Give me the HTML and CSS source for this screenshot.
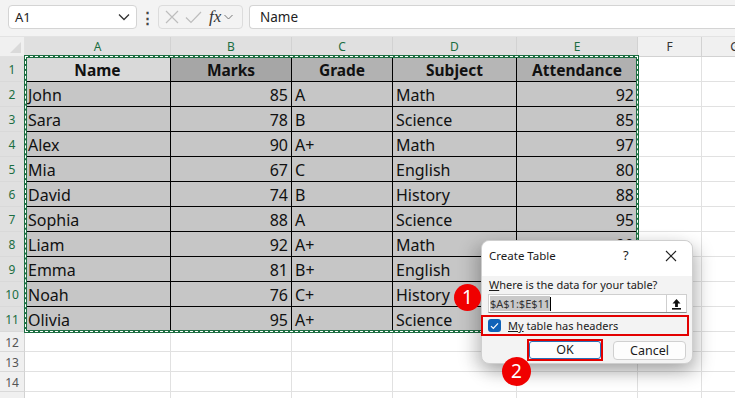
FILE: index.html
```html
<!DOCTYPE html>
<html lang="en">
<head>
	<meta charset="UTF-8">
	<title>Create Table</title>
	<link rel="stylesheet" href="styles.css">
</head>
<body>
	<div class="topbar">
		<div class="namebox">
			<span>A1</span>
			<svg width="12" height="8" viewBox="0 0 12 8"><path d="M1 1.5l5 5 5-5" fill="none" stroke="#333" stroke-width="1.3"/></svg>
		</div>
		<div class="dots">&#8942;</div>
		<div class="fxbox">
			<svg width="16" height="16" viewBox="0 0 16 16"><path d="M2 2l12 12M14 2L2 14" stroke="#bdbdbd" stroke-width="1.2" fill="none"/></svg>
			<svg width="17" height="16" viewBox="0 0 17 16"><path d="M1 8.5l5 5L16 3" stroke="#bdbdbd" stroke-width="1.2" fill="none"/></svg>
			<span class="fx">fx</span>
			<svg width="9" height="6" viewBox="0 0 9 6"><path d="M.5 1l4 4 4-4" fill="none" stroke="#777" stroke-width="1"/></svg>
		</div>
		<div class="formula">Name</div>
	</div>

	<div class="sheet">
		<div class="corner"><span class="tri"></span></div>
		<div class="ch sel">A</div><div class="ch sel">B</div><div class="ch sel">C</div><div class="ch sel">D</div><div class="ch sel">E</div><div class="ch">F</div><div class="ch">G</div>

		<div class="rh sel">1</div>
		<div class="t h h1">Name</div><div class="t h h2">Marks</div><div class="t h h3">Grade</div><div class="t h h4">Subject</div><div class="t h h5">Attendance</div><div class="g"></div><div class="g"></div>

		<div class="rh sel">2</div>
		<div class="t">John</div><div class="t n">85</div><div class="t">A</div><div class="t">Math</div><div class="t n">92</div><div class="g"></div><div class="g"></div>

		<div class="rh sel">3</div>
		<div class="t">Sara</div><div class="t n">78</div><div class="t">B</div><div class="t">Science</div><div class="t n">85</div><div class="g"></div><div class="g"></div>

		<div class="rh sel">4</div>
		<div class="t">Alex</div><div class="t n">90</div><div class="t">A+</div><div class="t">Math</div><div class="t n">97</div><div class="g"></div><div class="g"></div>

		<div class="rh sel">5</div>
		<div class="t">Mia</div><div class="t n">67</div><div class="t">C</div><div class="t">English</div><div class="t n">80</div><div class="g"></div><div class="g"></div>

		<div class="rh sel">6</div>
		<div class="t">David</div><div class="t n">74</div><div class="t">B</div><div class="t">History</div><div class="t n">88</div><div class="g"></div><div class="g"></div>

		<div class="rh sel">7</div>
		<div class="t">Sophia</div><div class="t n">88</div><div class="t">A</div><div class="t">Science</div><div class="t n">95</div><div class="g"></div><div class="g"></div>

		<div class="rh sel">8</div>
		<div class="t">Liam</div><div class="t n">92</div><div class="t">A+</div><div class="t">Math</div><div class="t n">90</div><div class="g"></div><div class="g"></div>

		<div class="rh sel">9</div>
		<div class="t">Emma</div><div class="t n">81</div><div class="t">B+</div><div class="t">English</div><div class="t n"></div><div class="g"></div><div class="g"></div>

		<div class="rh sel">10</div>
		<div class="t">Noah</div><div class="t n">76</div><div class="t">C+</div><div class="t">History</div><div class="t n"></div><div class="g"></div><div class="g"></div>

		<div class="rh sel">11</div>
		<div class="t">Olivia</div><div class="t n">95</div><div class="t">A+</div><div class="t">Science</div><div class="t n"></div><div class="g"></div><div class="g"></div>

		<div class="rh short">12</div>
		<div class="g"></div><div class="g"></div><div class="g"></div><div class="g"></div><div class="g"></div><div class="g"></div><div class="g"></div>

		<div class="rh short">13</div>
		<div class="g"></div><div class="g"></div><div class="g"></div><div class="g"></div><div class="g"></div><div class="g"></div><div class="g"></div>

		<div class="rh short">14</div>
		<div class="g"></div><div class="g"></div><div class="g"></div><div class="g"></div><div class="g"></div><div class="g"></div><div class="g"></div>

		<div class="rh short"></div>
		<div class="g"></div><div class="g"></div><div class="g"></div><div class="g"></div><div class="g"></div><div class="g"></div><div class="g"></div>
	</div>

	<!-- marching ants round the copied range -->
	<div class="ants"></div>

	<div class="dialog">
		<div class="dtitle">
			<span class="dname">Create Table</span>
			<span class="help">?</span>
			<svg class="close" width="12" height="12" viewBox="0 0 12 12"><path d="M1 1l10 10M11 1L1 11" stroke="#222" stroke-width="1.1" fill="none"/></svg>
		</div>
		<div class="dbody">
			<div class="label"><u>W</u>here is the data for your table?</div>
			<div class="range">
				<span class="rtext">$A$1:$E$11</span><span class="caret"></span>
				<span class="pick">
					<svg width="11" height="12" viewBox="0 0 11 12"><path d="M5.5 1L1.5 5.5h2.6V9h2.8V5.5h2.6z" fill="#111"/><rect x="1" y="10" width="9" height="1.6" fill="#111"/></svg>
				</span>
			</div>
			<div class="hdrrow">
				<span class="check">
					<svg width="9" height="8" viewBox="0 0 9 8"><path d="M1 4.2l2.3 2.3L8 1.4" stroke="#fff" stroke-width="1.2" fill="none"/></svg>
				</span>
				<span><u>My</u> table has headers</span>
			</div>
			<div class="buttons">
				<div class="okmark"><div class="btn ok">OK</div></div>
				<div class="btn">Cancel</div>
			</div>
		</div>
	</div>

	<div class="badge b1">1</div>
	<div class="badge b2">2</div>
</body>
</html>
```

FILE: styles.css
```css
*{
	box-sizing: border-box;
}
body{
	margin: 0;
	width: 735px;
	height: 398px;
	overflow: hidden;
	position: relative;
	background: #fff;
	font-family: "Noto Sans", "Open Sans", sans-serif;
	color: #000;
}

/* formula bar */
.topbar{
	height: 37px;
	background: #f3f3f3;
	display: flex;
	align-items: flex-start;
	padding: 5px 0 0 8px;
	border-bottom: 1px solid #e3e3e3;
}
.namebox{
	width: 129px;
	height: 24px;
	background: #fff;
	border: 1px solid #d4d4d4;
	border-radius: 4px;
	display: flex;
	align-items: center;
	justify-content: space-between;
	padding: 0 6px 0 6px;
	font-size: 13px;
	color: #222;
}
.dots{
	width: 21px;
	text-align: center;
	font-size: 15px;
	line-height: 24px;
	color: #444;
	font-weight: bold;
}
.fxbox{
	width: 85px;
	height: 24px;
	border: 1px solid #dcdcdc;
	border-radius: 4px;
	display: flex;
	align-items: center;
	padding-left: 5px;
	gap: 5px;
}
.fx{
	font-family: "Liberation Serif", serif;
	font-style: italic;
	font-size: 17px;
	color: #333;
	margin-left: 2px;
	margin-right: -2px;
}
.formula{
	flex: 1;
	height: 24px;
	margin-left: 6px;
	background: #fff;
	border: 1px solid #d4d4d4;
	border-right: none;
	border-radius: 4px 0 0 4px;
	padding-left: 10px;
	font-size: 13.5px;
	line-height: 22px;
	color: #222;
}

/* the sheet */
.sheet{
	display: grid;
	grid-template-columns: 25px 146px 121px 101px 124px 121px 64px 66px;
	grid-template-rows: 20px repeat(11, 25px) repeat(4, 20px);
}
.sheet > div{
	border-right: 1px solid #e1e1e1;
	border-bottom: 1px solid #e1e1e1;
}
.corner{
	background: #f0f0f0;
	position: relative;
}
.tri{
	position: absolute;
	right: 3px;
	bottom: 3px;
	width: 0;
	height: 0;
	border-left: 11px solid transparent;
	border-bottom: 11px solid #dadada;
}
.ch{
	background: #f0f0f0;
	text-align: center;
	font-size: 12px;
	line-height: 19px;
	color: #333;
}
.sheet > .ch{
	border-right: 1px solid #d2d2d2;
	border-bottom: 1px solid #d2d2d2;
}
.ch.sel{
	background: #e0e0e0;
	color: #1b6e42;
}
.rh{
	background: #f0f0f0;
	text-align: center;
	font-size: 12px;
	line-height: 24px;
	color: #555;
	padding-top: 1px;
}
.sheet > .rh{
	border-right: 1px solid #d2d2d2;
	border-bottom: 1px solid #d9d9d9;
}
.rh.short{
	line-height: 19px;
}
.rh.sel{
	background: #e0e0e0;
	color: #1b6e42;
}
.sheet > .t{
	background: #c6c6c6;
	border-right: 1px solid #000;
	border-bottom: 1px solid #000;
	font-size: 16px;
	line-height: 24px;
	padding: 1px 3px 0 3px;
	white-space: nowrap;
	overflow: hidden;
	color: #111;
}
.t.n{
	text-align: right;
}
.t.h{
	font-weight: bold;
	text-align: center;
	font-size: 15.5px;
}
.t.h1{ background: #d9d9d9; }
.t.h2{ background: #a6a6a6; }
.t.h3{ background: #b2b2b2; }
.t.h4{ background: #b6b6b6; }
.t.h5{ background: #b0b0b0; }

.ants{
	position: absolute;
	left: 24px;
	top: 55px;
	width: 615px;
	height: 278px;
	border: 3px solid #1d6f42;
	pointer-events: none;
}
.ants::before{
	content: "";
	position: absolute;
	left: -2px;
	top: -2px;
	right: -2px;
	bottom: -2px;
	border: 1px dashed #fff;
}

/* dialog */
.dialog{
	position: absolute;
	left: 481px;
	top: 240px;
	width: 212px;
	height: 124px;
	background: #f3f3f3;
	border: 1px solid #cfcfcf;
	border-radius: 8px;
	box-shadow: 4px 8px 18px rgba(0,0,0,0.28), -10px 4px 16px rgba(0,0,0,0.12);
	font-size: 11px;
	color: #1a1a1a;
}
.dtitle{
	height: 35px;
	background: #fff;
	border-radius: 8px 8px 0 0;
	display: flex;
	align-items: flex-start;
	padding: 6px 0 0 7px;
	line-height: 17px;
}
.dname{
	flex: 1;
	font-size: 11.5px;
}
.help{
	width: 44px;
	font-size: 13px;
	padding-left: 2px;
}
.close{
	margin: 3px 15px 0 0;
}
.dbody{
	padding: 1px 5px 0 6px;
}
.label{
	line-height: 15px;
	padding-left: 1px;
}
.range{
	margin-top: 2px;
	height: 19px;
	background: #fff;
	border: 1px solid #cfcfcf;
	border-bottom-color: #8a8a8a;
	display: flex;
	align-items: center;
	padding-left: 1px;
}
.rtext{
	background: #c9c9c9;
	line-height: 15px;
	color: #333;
}
.caret{
	width: 1px;
	height: 14px;
	background: #000;
}
.pick{
	margin-left: auto;
	width: 20px;
	height: 17px;
	border-left: 1px solid #cfcfcf;
	display: flex;
	align-items: center;
	justify-content: center;
}
.hdrrow{
	margin: 2px -2px 0 -7px;
	height: 21px;
	border: 2px solid #e30000;
	display: flex;
	align-items: center;
	padding-left: 5px;
	gap: 7px;
}
.check{
	width: 13px;
	height: 13px;
	border-radius: 3px;
	background: #0f62b8;
	display: flex;
	align-items: center;
	justify-content: center;
}
.buttons{
	display: flex;
	justify-content: flex-end;
	align-items: center;
	gap: 10px;
	margin-top: 3px;
	padding-right: 1px;
}
.okmark{
	border: 2px solid #e30000;
	width: 76px;
	height: 22px;
	padding: 0;
}
.btn{
	width: 73px;
	height: 19px;
	background: #fdfdfd;
	border: 1px solid #d0d0d0;
	border-radius: 4px;
	text-align: center;
	line-height: 17px;
	font-size: 12.5px;
}
.btn.ok{
	width: 72px;
	height: 18px;
	border-color: #2a6fb8;
	border-radius: 3px;
	line-height: 16px;
}

/* numbered callouts */
.badge{
	position: absolute;
	width: 27px;
	height: 27px;
	border-radius: 50%;
	background: #f00000;
	color: #fff;
	text-align: center;
	font-size: 19px;
	line-height: 27px;
}
.b1{
	left: 454px;
	top: 284px;
}
.b2{
	left: 502px;
	top: 357px;
	width: 29px;
	height: 29px;
	line-height: 29px;
}
```
